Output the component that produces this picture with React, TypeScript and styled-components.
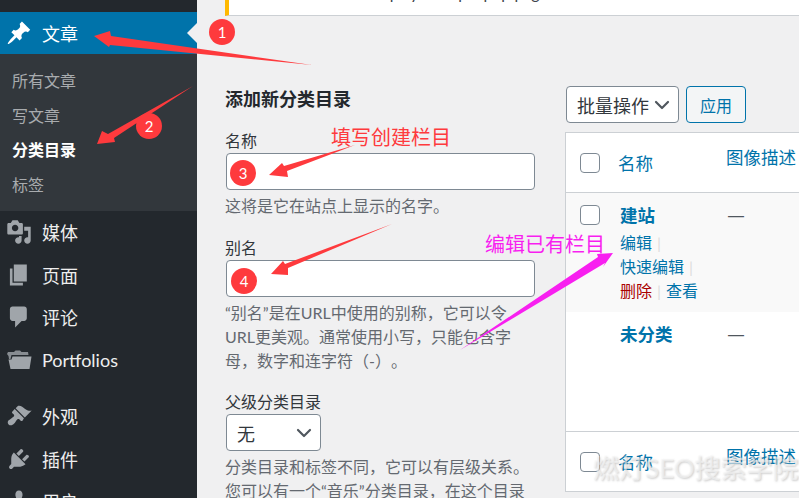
import styled, { createGlobalStyle } from "styled-components";
import { ChevronDown } from "lucide-react";

const FONT = `Lato, "Noto Sans CJK SC", sans-serif`;

const GlobalStyle = createGlobalStyle`
  html, body {
    margin: 0;
    padding: 0;
    background: #f0f0f1;
  }
  * {
    box-sizing: border-box;
  }
`;

const Dashicon = ({ d, color = "#a0a5aa" }: { d: string; color?: string }) => (
  <svg viewBox="0 0 20 20" width="26" height="26" fill={color}>
    <path d={d} />
  </svg>
);

const PIN =
  "M10.44 3.02l1.82-1.82 6.36 6.35-1.83 1.82c-1.05-.68-2.48-.57-3.41.36l-.75.75c-.92.93-1.04 2.35-.35 3.41l-1.83 1.82-2.41-2.41-2.8 2.79c-.42.42-3.38 2.71-3.8 2.29s1.86-3.39 2.28-3.81l2.79-2.79L4.1 9.36l1.83-1.82c1.05.69 2.48.57 3.4-.36l.75-.75c.93-.92 1.05-2.35.36-3.41z";
const MEDIA =
  "M13 11V4c0-.55-.45-1-1-1h-1.67L9 1H5L3.67 3H2c-.55 0-1 .45-1 1v7c0 .55.45 1 1 1h10c.55 0 1-.45 1-1zM7 4.5c1.38 0 2.5 1.12 2.5 2.5S8.38 9.5 7 9.5 4.5 8.38 4.5 7 5.62 4.5 7 4.5zM14 6h5v10.5c0 1.38-1.12 2.5-2.5 2.5S14 17.88 14 16.5s1.12-2.5 2.5-2.5c.17 0 .34.02.5.05V9h-3V6zm-4 8.05V13h2v3.5c0 1.38-1.12 2.5-2.5 2.5S7 17.88 7 16.5 8.12 14 9.5 14c.17 0 .34.02.5.05z";
const PAGES = "M6 15V2h10v13H6zm-1 1h8v2H3V5h2v11z";
const COMMENT =
  "M5 2h9c1.1 0 2 .9 2 2v7c0 1.1-.9 2-2 2h-2l-5 5v-5H5c-1.1 0-2-.9-2-2V4c0-1.1.9-2 2-2z";
const BRUSH =
  "M14.48 11.06L7.41 3.99l1.5-1.5c.5-.56 2.3-.47 3.51.32 1.21.8 1.43 1.28 2.91 2.1 1.18.64 2.45 1.26 4.45.85zm-.71.71L6.7 4.7 4.93 6.47c-.39.39-.39 1.02 0 1.41l1.06 1.06c.39.39.39 1.03 0 1.42-.6.6-1.43 1.11-2.21 1.69-.35.26-.7.53-1.01.84C1.43 13.23.78 15.25 2 16.5c1.23 1.22 3.25.57 4.28-.77.31-.31.58-.66.84-1.01.58-.78 1.09-1.61 1.69-2.21.39-.39 1.03-.39 1.42 0l1.06 1.06c.39.39 1.02.39 1.41 0z";
const PLUGIN =
  "M13.11 4.36L9.87 7.6 8 5.73l3.24-3.24c.35-.34 1.05-.2 1.56.32.52.51.66 1.21.31 1.55zm-8 1.77l.91-1.12 9.01 9.01-1.19.84c-.71.71-2.63 1.16-3.82 1.16H6.14L4.9 17.26c-.59.59-1.54.59-2.12 0-.59-.58-.59-1.53 0-2.12l1.24-1.24v-3.88c0-1.13.4-3.19 1.09-3.89zm7.26 3.97l3.24-3.24c.34-.35 1.04-.21 1.55.31.52.51.66 1.21.31 1.55l-3.24 3.25z";
const USERS =
  "M10 9.25c-2.27 0-2.73-3.44-2.73-3.44C7 4.02 7.82 2 9.97 2c2.16 0 2.98 2.02 2.71 3.81 0 0-.41 3.44-2.68 3.44zm0 2.57L12.72 10c2.39 0 4.52 2.33 4.52 4.53v2.49s-3.65 1.13-7.24 1.13c-3.65 0-7.24-1.13-7.24-1.13v-2.49c0-2.25 1.94-4.48 4.47-4.48z";

const FolderIcon = () => (
  <svg viewBox="0 0 26 20" width="26" height="20" fill="#a0a5aa">
    <path d="M1 4 L2 2 H8 L9.5 0.5 H14 L15.5 2 H22 L22.5 5 H5.5 L4.5 9 L3 9 L2.5 6 Z" opacity="0.8" />
    <path d="M6.5 6.5 H25.5 L23.5 19 H4.5 L2.5 9.5 H5.5 Z" />
  </svg>
);

const MENU_ABOVE = [
  { label: "媒体", icon: <Dashicon d={MEDIA} /> },
  { label: "页面", icon: <Dashicon d={PAGES} /> },
  { label: "评论", icon: <Dashicon d={COMMENT} /> },
  { label: "Portfolios", icon: <FolderIcon /> },
];

const MENU_BELOW = [
  { label: "外观", icon: <Dashicon d={BRUSH} /> },
  { label: "插件", icon: <Dashicon d={PLUGIN} /> },
  { label: "用户", icon: <Dashicon d={USERS} /> },
];

function Sidebar() {
  return (
    <Side>
      <ActiveItem>
        <IconSlot>
          <Dashicon d={PIN} color="#fff" />
        </IconSlot>
        文章
        <Notch />
      </ActiveItem>
      <SubMenu>
        <SubItem>所有文章</SubItem>
        <SubItem>写文章</SubItem>
        <SubItem $current>分类目录</SubItem>
        <SubItem>标签</SubItem>
      </SubMenu>
      {MENU_ABOVE.map((m) => (
        <MenuItem key={m.label}>
          <IconSlot>{m.icon}</IconSlot>
          {m.label}
        </MenuItem>
      ))}
      <MenuGap />
      {MENU_BELOW.map((m) => (
        <MenuItem key={m.label}>
          <IconSlot>{m.icon}</IconSlot>
          {m.label}
        </MenuItem>
      ))}
    </Side>
  );
}

function AddForm() {
  return (
    <FormColumn>
      <FormTitle>添加新分类目录</FormTitle>
      <Field $top={18}>
        <Label>名称</Label>
        <TextInput />
        <Help>这将是它在站点上显示的名字。</Help>
      </Field>
      <Field $top={19}>
        <Label>别名</Label>
        <TextInput />
        <Help>
          “别名”是在URL中使用的别称，它可以令
          <br />
          URL更美观。通常使用小写，只能包含字
          <br />
          母，数字和连字符（-）。
        </Help>
      </Field>
      <Field $top={18}>
        <Label>父级分类目录</Label>
        <Select $width={95}>
          无
          <ChevronDown size={24} strokeWidth={2.2} color="#50575e" />
        </Select>
        <Help>
          分类目录和标签不同，它可以有层级关系。
          <br />
          您可以有一个“音乐”分类目录，在这个目录
        </Help>
      </Field>
    </FormColumn>
  );
}

function TermsTable() {
  return (
    <TableColumn>
      <Toolbar>
        <Select $width={113}>
          批量操作
          <ChevronDown size={24} strokeWidth={2.2} color="#50575e" />
        </Select>
        <ApplyButton>应用</ApplyButton>
      </Toolbar>
      <Table>
        <HeadRow>
          <Check />
          <NameHead>名称</NameHead>
          <DescHead>图像描述</DescHead>
        </HeadRow>
        <TermRow $alt>
          <Check />
          <TermBody>
            <TermName>建站</TermName>
            <Actions>
              <ActionLine>
                <ActionLink>编辑</ActionLink>
                <Sep>|</Sep>
              </ActionLine>
              <ActionLine>
                <ActionLink>快速编辑</ActionLink>
                <Sep>|</Sep>
              </ActionLine>
              <ActionLine>
                <DeleteLink>删除</DeleteLink>
                <Sep>|</Sep>
                <ActionLink>查看</ActionLink>
              </ActionLine>
            </Actions>
          </TermBody>
          <Dash>—</Dash>
        </TermRow>
        <TermRow>
          <CheckSpace />
          <TermBody>
            <TermName>未分类</TermName>
          </TermBody>
          <Dash>—</Dash>
        </TermRow>
        <FootRow>
          <Check />
          <NameHead>名称</NameHead>
          <DescHead>图像描述</DescHead>
        </FootRow>
      </Table>
    </TableColumn>
  );
}

// red / magenta arrows and number badges pasted over the screenshot
function Annotations() {
  return (
    <>
      <ArrowLayer viewBox="0 0 799 498">
        <polygon points="94,36 110,31 111,36 312,65 110,45 109,47" fill="#fe3a3d" />
        <polygon points="97,144 102,131 108,134 193,86 114,138 115,142" fill="#fe3a3d" />
        <polygon points="269,175 282,163 284,166 355,145 287,171 288,177" fill="#fe3a3d" />
        <polygon points="271,274 283,261 285,264 392,224 288,268 288,275" fill="#fe3a3d" />
        <polygon points="613,253 597,254 598,257 460,350 605,263 603,267" fill="#f81ff0" />
      </ArrowLayer>
      <Badge $x={209} $y={19}>1</Badge>
      <Badge $x={136} $y={113}>2</Badge>
      <Badge $x={230} $y={160}>3</Badge>
      <Badge $x={231} $y={268}>4</Badge>
      <Note $x={331} $y={122} $color="#fe3a3d">填写创建栏目</Note>
      <Note $x={485} $y={229} $color="#f81ff0">编辑已有栏目</Note>
      <Watermark>燃灯SEO搜索学院</Watermark>
    </>
  );
}

export default function App() {
  return (
    <Page>
      <GlobalStyle />
      <Sidebar />
      <Main>
        <Notice>
          <NoticeText>display a simple php page</NoticeText>
        </Notice>
        <Columns>
          <AddForm />
          <TermsTable />
        </Columns>
      </Main>
      <Annotations />
    </Page>
  );
}

const Page = styled.div`
  position: relative;
  display: flex;
  width: 799px;
  height: 498px;
  overflow: hidden;
  font-family: ${FONT};
  background: #f0f0f1;
  text-spacing-trim: space-all;
`;

const Side = styled.nav`
  flex: 0 0 197px;
  background: #23282d;
  padding-top: 12px;
  color: #eee;
`;

const IconSlot = styled.span`
  display: flex;
  justify-content: center;
  align-items: center;
  width: 26px;
  margin: 0 10px 0 6px;
  flex: none;
`;

const MenuItem = styled.div`
  display: flex;
  align-items: center;
  height: 42.5px;
  font-size: 18px;
  padding-right: 8px;
  color: #eeeeee;
`;

const ActiveItem = styled(MenuItem)`
  position: relative;
  height: 42px;
  background: #0073aa;
  color: #fff;
`;

const Notch = styled.span`
  position: absolute;
  right: 0;
  top: 11px;
  border: 10px solid transparent;
  border-left-width: 0;
  border-right-color: #f0f0f1;
`;

const SubMenu = styled.div`
  background: #32373c;
  padding: 10px 0 7px;
  height: 157px;
`;

const SubItem = styled.div<{ $current?: boolean }>`
  height: 34.7px;
  line-height: 34.7px;
  padding-left: 12px;
  font-size: 16px;
  font-weight: ${(p) => (p.$current ? 700 : 400)};
  color: ${(p) => (p.$current ? "#fff" : "#a8abae")};
`;

const MenuGap = styled.div`
  height: 14px;
`;

const Main = styled.main`
  flex: 1;
  min-width: 0;
  padding-left: 28px;
`;

const Notice = styled.div`
  height: 16px;
  width: 900px;
  background: #fff;
  border-left: 4px solid #ffb900;
  border-bottom: 1px solid #ccd0d4;
  overflow: hidden;
`;

const NoticeText = styled.div`
  margin: -19px 0 0 141px;
  font-size: 16px;
  line-height: 24px;
  color: #3c434a;
`;

const Columns = styled.div`
  display: flex;
  align-items: flex-start;
  gap: 30px;
`;

const FormColumn = styled.section`
  flex: 0 0 310px;
  padding-top: 70px;
`;

const FormTitle = styled.h2`
  margin: 0;
  font-size: 18px;
  line-height: 26px;
  font-weight: 700;
  color: #23282d;
`;

const Field = styled.div<{ $top: number }>`
  margin-top: ${(p) => p.$top}px;
`;

const Label = styled.div`
  font-size: 16px;
  line-height: 22px;
  margin-bottom: 1px;
  color: #32373c;
`;

const TextInput = styled.div`
  width: 309px;
  height: 37px;
  margin-left: 1px;
  background: #fff;
  border: 1px solid #7e8993;
  border-radius: 4px;
`;

const Help = styled.p`
  margin: 4px 0 0;
  font-size: 16px;
  line-height: 24px;
  color: #646970;
  white-space: nowrap;
`;

const Select = styled.div<{ $width: number }>`
  display: flex;
  align-items: center;
  justify-content: space-between;
  width: ${(p) => p.$width}px;
  height: 37px;
  margin-left: 1px;
  padding: 0 4px 0 10px;
  background: #fff;
  border: 1px solid #7e8993;
  border-radius: 4px;
  font-size: 18px;
  color: #32373c;
  white-space: nowrap;
`;

const TableColumn = styled.section`
  flex: none;
  width: 400px;
  padding-top: 70px;
`;

const Toolbar = styled.div`
  display: flex;
  gap: 7px;
`;

const ApplyButton = styled.div`
  display: flex;
  align-items: center;
  justify-content: center;
  width: 60px;
  height: 37px;
  border: 1px solid #0073aa;
  border-radius: 4px;
  background: #f3f5f6;
  color: #0073aa;
  font-size: 16px;
`;

const Table = styled.div`
  margin-top: 9px;
  background: #fff;
  border: 1px solid #ccd0d4;
  height: 360px;
`;

const HeadRow = styled.div`
  display: flex;
  align-items: center;
  height: 60px;
  padding-left: 14px;
  border-bottom: 1px solid #ccd0d4;
`;

const FootRow = styled(HeadRow)`
  border-bottom: 0;
  border-top: 1px solid #ccd0d4;
`;

const Check = styled.span`
  flex: none;
  width: 20px;
  height: 20px;
  background: #fff;
  border: 1px solid #7e8993;
  border-radius: 4px;
`;

const CheckSpace = styled.span`
  flex: none;
  width: 20px;
`;

const NameHead = styled.span`
  flex: none;
  width: 108px;
  margin-left: 18px;
  font-size: 17.5px;
  color: #0073aa;
`;

const DescHead = styled.span`
  margin-top: -13px;
  font-size: 17.5px;
  color: #0073aa;
  white-space: nowrap;
`;

const TermRow = styled.div<{ $alt?: boolean }>`
  display: flex;
  align-items: flex-start;
  height: 119px;
  padding: 12px 0 0 14px;
  background: ${(p) => (p.$alt ? "#f9f9f9" : "#fff")};
`;

const TermBody = styled.div`
  flex: none;
  width: 108px;
  margin-left: 20px;
`;

const TermName = styled.div`
  font-size: 17.5px;
  line-height: 22px;
  font-weight: 700;
  color: #0073aa;
`;

const Actions = styled.div`
  margin-top: 4px;
  font-size: 16px;
  line-height: 24px;
`;

const ActionLine = styled.div`
  white-space: nowrap;
`;

const ActionLink = styled.span`
  color: #0073aa;
`;

const DeleteLink = styled.span`
  color: #a00;
`;

const Sep = styled.span`
  margin: 0 5px;
  color: #ddd;
`;

const Dash = styled.span`
  font-family: "Liberation Sans", sans-serif;
  font-size: 16px;
  line-height: 22px;
  color: #50575e;
`;

const ArrowLayer = styled.svg`
  position: absolute;
  inset: 0;
  width: 799px;
  height: 498px;
  pointer-events: none;
`;

const Badge = styled.span<{ $x: number; $y: number }>`
  position: absolute;
  left: ${(p) => p.$x}px;
  top: ${(p) => p.$y}px;
  width: 26px;
  height: 26px;
  border-radius: 50%;
  background: #fe3a3d;
  color: #fff;
  font-size: 15px;
  line-height: 26px;
  text-align: center;
`;

const Note = styled.span<{ $x: number; $y: number; $color: string }>`
  position: absolute;
  left: ${(p) => p.$x}px;
  top: ${(p) => p.$y + 1}px;
  font-size: 20px;
  line-height: 28px;
  color: ${(p) => p.$color};
  white-space: nowrap;
`;

const Watermark = styled.span`
  position: absolute;
  left: 593px;
  top: 450px;
  font-size: 26px;
  line-height: 36px;
  font-weight: 500;
  color: rgba(245, 245, 245, 0.6);
  text-shadow: 1px 1px 2px rgba(120, 120, 120, 0.35);
  white-space: nowrap;
`;
